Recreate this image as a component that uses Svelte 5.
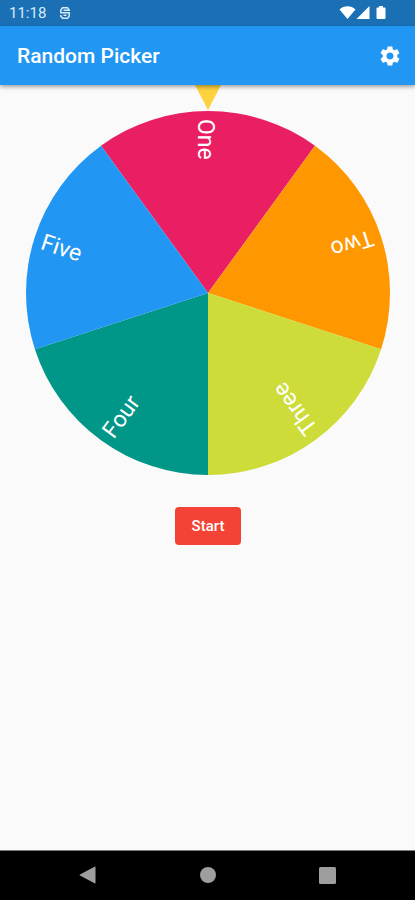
<script>
  const names = [
    { text: "One", color: "#e91e63" },
    { text: "Two", color: "#ff9800" },
    { text: "Three", color: "#cddc39" },
    { text: "Four", color: "#009688" },
    { text: "Five", color: "#2196f3" },
  ];

  const radius = 182;
  const step = 360 / names.length;

  let turn = $state(0);

  function point(deg) {
    const rad = (deg * Math.PI) / 180;
    return `${radius * Math.sin(rad)} ${-radius * Math.cos(rad)}`;
  }

  // slice i is centred on i * step, clockwise from the top
  function slice(i) {
    const mid = i * step;
    return `M0 0L${point(mid - step / 2)}A${radius} ${radius} 0 0 1 ${point(mid + step / 2)}Z`;
  }

  function start() {
    turn += 1440 + Math.floor(Math.random() * 360);
  }
</script>

<div class="screen">
  <div class="status">
    <span class="clock">11:18</span>
    <svg class="notice" viewBox="0 0 12 14" width="12" height="14">
      <path d="M10.200 4.200L8.500 1.700H3.500L1.800 4V6.700H10.200V10.300L8.500 12.300H3.500L1.800 10.300V9M4.500 9.300H7.500M4.500 4.200H11" />
    </svg>
    <svg class="signals" viewBox="0 0 48 16" width="48" height="16">
      <path d="M0.500 4.500C5 0.200 12 0.200 16.500 4.500L8.500 14Z" />
      <path d="M30.500 1V14H17.500Z" />
      <path d="M40 1h4v1.500h1.500q1 0 1 1V13q0 1-1 1h-7q-1 0-1-1V3.500q0-1 1-1H40Z" />
    </svg>
  </div>

  <header>
    <h1>Random Picker</h1>
    <button class="settings" aria-label="Settings">
      <svg viewBox="0 0 24 24" width="24" height="24">
        <path d="M19.140 12.940c.04-.3.060-.61.060-.94 0-.32-.02-.64-.07-.94l2.030-1.580c.18-.14.230-.41.120-.61l-1.920-3.320c-.12-.22-.37-.29-.59-.22l-2.390.96c-.5-.38-1.030-.7-1.620-.94l-.36-2.540c-.04-.24-.24-.41-.48-.41h-3.840c-.24 0-.43.170-.47.410l-.36 2.540c-.59.240-1.130.570-1.620.940l-2.390-.96c-.22-.08-.47 0-.59.220L2.740 8.870c-.12.210-.08.470.120.610l2.030 1.580c-.05.300-.09.630-.09.940s.02.640.070.940l-2.030 1.580c-.18.140-.23.410-.12.610l1.920 3.320c.12.220.370.290.590.220l2.390-.96c.5.380 1.030.700 1.620.940l.36 2.540c.05.240.240.410.480.410h3.840c.24 0 .44-.17.470-.41l.36-2.540c.59-.24 1.130-.56 1.620-.94l2.390.96c.22.080.470 0 .59-.22l1.920-3.320c.12-.22.070-.47-.12-.61l-2.010-1.580zM12 15.600c-1.980 0-3.600-1.620-3.600-3.600s1.620-3.600 3.600-3.600 3.600 1.620 3.600 3.600-1.620 3.600-3.600 3.600z" />
      </svg>
    </button>
  </header>

  <main>
    <svg class="pointer" viewBox="0 0 26 25" width="26" height="25">
      <path d="M0 0H26L13 25Z" />
    </svg>

    <svg class="wheel" viewBox="-182 -182 364 364">
      <g class="disc" style="transform: rotate({turn}deg)">
        {#each names as name, i}
          <path d={slice(i)} fill={name.color} />
        {/each}
        {#each names as name, i}
          <text x="-174" y="10" transform="rotate({90 + i * step})">{name.text}</text>
        {/each}
      </g>
    </svg>

    <button class="start" onclick={start}>Start</button>
  </main>

  <nav>
    <button aria-label="Back">
      <svg viewBox="0 0 24 24" width="24" height="24"><path d="M4 10.400L18.500 2.700q1-.4 1 .6V18.700q0 1-1 .6L4 11.600q-1-.6 0-1.200Z" /></svg>
    </button>
    <button aria-label="Home">
      <svg viewBox="0 0 24 24" width="24" height="24"><circle cx="12" cy="11" r="8" /></svg>
    </button>
    <button aria-label="Recent apps">
      <svg viewBox="0 0 24 24" width="24" height="24"><rect x="3" y="3" width="17" height="17" rx="1.500" /></svg>
    </button>
  </nav>
</div>

<style>
  :global(body) {
    margin: 0;
    background: #fafafa;
  }

  .screen {
    display: flex;
    flex-direction: column;
    min-height: 100vh;
    font-family: Roboto, sans-serif;
    color: #fff;
  }

  button {
    padding: 0;
    border: none;
    background: none;
    color: inherit;
    font-family: inherit;
    cursor: pointer;
  }

  svg {
    display: block;
    fill: currentColor;
  }

  .status {
    display: flex;
    align-items: center;
    height: 26px;
    padding: 0 28px 0 9px;
    background: #1a6fb5;
  }

  .clock {
    font-size: 15px;
    line-height: 26px;
    color: #d8ebfa;
  }

  .notice {
    margin-left: 13px;
    fill: none;
    stroke: #d8ebfa;
    stroke-width: 1.5;
  }

  .signals {
    margin-left: auto;
  }

  header {
    display: flex;
    align-items: center;
    justify-content: space-between;
    height: 59px;
    padding: 0 13px 0 17px;
    background: #2196f3;
    box-shadow: 0 2px 4px rgba(0, 0, 0, 0.35);
    z-index: 1;
  }

  h1 {
    margin: 0;
    font-size: 21px;
    font-weight: 500;
    line-height: 28px;
  }

  main {
    flex: 1;
    display: flex;
    flex-direction: column;
    align-items: center;
    padding: 0 25px 0 26px;
  }

  .pointer {
    fill: #fdd23e;
  }

  .wheel {
    width: 100%;
    margin-top: 1px;
    overflow: visible;
  }

  .disc {
    transition: transform 4s ease-out;
  }

  .wheel text {
    font-size: 23px;
    fill: #fff;
  }

  .start {
    height: 38px;
    margin-top: 32px;
    padding: 0 17px;
    border-radius: 4px;
    background: #f44336;
    font-size: 15px;
    font-weight: 500;
  }

  nav {
    display: flex;
    align-items: center;
    justify-content: center;
    gap: 96px;
    height: 49px;
    border-top: 1px solid #7b7f7d;
    background: #000;
    color: #9e9e9e;
  }
</style>
